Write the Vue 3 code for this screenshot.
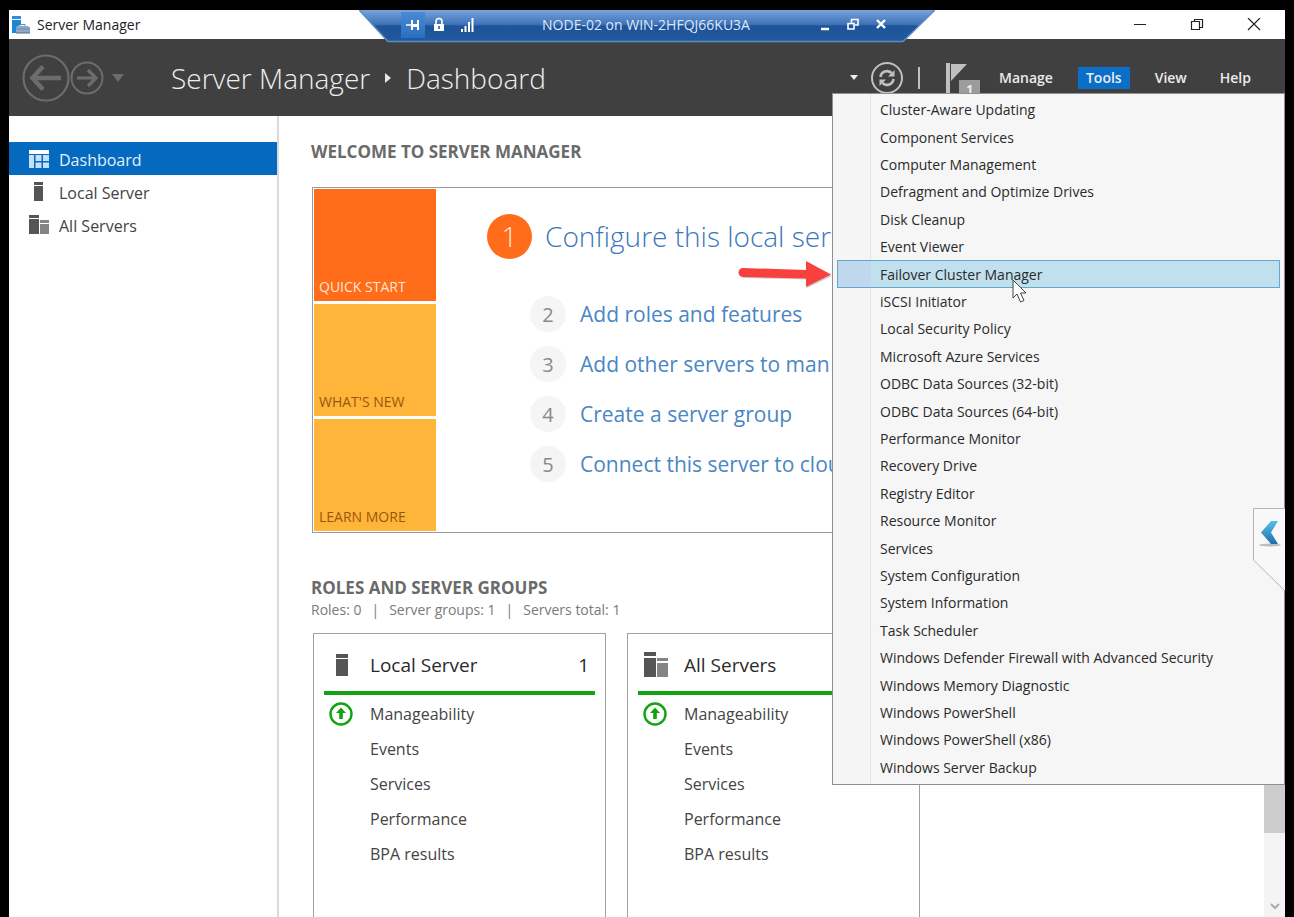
<template>
  <div class="screen">
    <div class="window">
      <!-- title bar -->
      <header class="titlebar">
        <svg class="app-icon" width="19" height="18" viewBox="0 0 19 18">
          <rect x="1" y="0" width="9" height="3" fill="#2f8fd8" />
          <path d="M1 4h9v4L6 11v6H1z" fill="#1f86d6" />
          <path d="M5 11l3-1h8l3 1v6H5z" fill="#8fa9c4" />
          <path d="M5 13h14M9 10V8.500h5V10" fill="none" stroke="#6d8db0" />
          <path d="M5 17h14" stroke="#4f6f92" />
        </svg>
        <span class="app-name">Server Manager</span>
        <div class="window-buttons">
          <button class="window-button" aria-label="Minimize">
            <svg width="14" height="14" viewBox="0 0 14 14"><path d="M1 6.500h12" stroke="#222" /></svg>
          </button>
          <button class="window-button" aria-label="Restore">
            <svg width="14" height="14" viewBox="0 0 14 14" fill="none" stroke="#222">
              <path d="M1.500 3.500h8v8h-8zM4.500 3V1.500h8v8H10" stroke-width="1.200" />
            </svg>
          </button>
          <button class="window-button" aria-label="Close">
            <svg width="14" height="14" viewBox="0 0 14 14"><path d="M1 0l12 12M13 0L1 12" stroke="#222" stroke-width="1.200" /></svg>
          </button>
        </div>
      </header>

      <!-- remote connection bar -->
      <div class="rdp-bar">
        <svg class="rdp-shape" width="576" height="33" viewBox="0 0 576 33">
          <defs>
            <linearGradient id="rdpFill" x1="0" y1="0" x2="0" y2="1">
              <stop offset="0" stop-color="#79a3db" />
              <stop offset="0.450" stop-color="#3d72b8" />
              <stop offset="0.500" stop-color="#1f5299" />
              <stop offset="1" stop-color="#215a9f" />
            </linearGradient>
          </defs>
          <path d="M0 0h576l-32 32H29z" fill="url(#rdpFill)" />
          <path d="M0 0l29 31.500h515L576 0" fill="none" stroke="#5d8cc0" stroke-width="1.500" />
        </svg>
        <div class="rdp-content">
          <button class="rdp-button rdp-pin" aria-label="Pin">
            <svg width="16" height="14" viewBox="0 0 16 14" fill="none" stroke="#fff">
              <path d="M1 7h6" stroke-width="1.500" />
              <path d="M7 2v10M13 2v10" stroke-width="2" />
              <path d="M7 7.500h6" stroke-width="3" />
            </svg>
          </button>
          <button class="rdp-button" aria-label="Security">
            <svg width="14" height="16" viewBox="0 0 14 16">
              <path d="M4 7V4.500a3 3 0 0 1 6 0V7" fill="none" stroke="#fff" stroke-width="1.600" />
              <rect x="2" y="7" width="10" height="7" fill="#fff" />
              <path d="M7 9v3" stroke="#24599f" stroke-width="1.600" />
            </svg>
          </button>
          <button class="rdp-button" aria-label="Connection quality">
            <svg width="16" height="16" viewBox="0 0 16 16" fill="none" stroke="#fff" stroke-width="2">
              <path d="M3 15v-3M6.500 15V9M10 15V5M13.500 15V1" />
            </svg>
          </button>
          <span class="rdp-title">NODE-02 on WIN-2HFQJ66KU3A</span>
          <button class="rdp-button" aria-label="Minimize connection">
            <svg width="12" height="14" viewBox="0 0 12 14"><path d="M2 11h8" stroke="#fff" stroke-width="2.500" /></svg>
          </button>
          <button class="rdp-button" aria-label="Restore connection">
            <svg width="14" height="14" viewBox="0 0 14 14" fill="none" stroke="#fff" stroke-width="1.600">
              <path d="M2 5.500h6V11H2zM5.500 4.500V1.500H12V7H9" />
            </svg>
          </button>
          <button class="rdp-button" aria-label="Disconnect">
            <svg width="12" height="14" viewBox="0 0 12 14"><path d="M2 2l8 8M10 2l-8 8" stroke="#fff" stroke-width="2.400" /></svg>
          </button>
        </div>
      </div>

      <!-- navigation band -->
      <nav class="navband">
        <button class="nav-button" aria-label="Back">
          <svg width="48" height="48" viewBox="0 0 48 48" fill="none" stroke="#6c6c6c">
            <circle cx="24" cy="24" r="22.500" stroke-width="2.200" />
            <path d="M39 24H12M21 12.500L10.500 24 21 35.500" stroke-width="4.500" />
          </svg>
        </button>
        <button class="nav-button" aria-label="Forward">
          <svg width="34" height="34" viewBox="0 0 34 34" fill="none" stroke="#6c6c6c">
            <circle cx="17" cy="17" r="15.500" stroke-width="2" />
            <path d="M7 17h18M18 9l8 8-8 8" stroke-width="3.200" />
          </svg>
        </button>
        <button class="nav-button nav-history" aria-label="History">
          <svg width="12" height="8" viewBox="0 0 12 8"><path d="M0 0h12L6 8z" fill="#6c6c6c" /></svg>
        </button>
        <h1 class="breadcrumb">
          <span>Server Manager</span>
          <svg width="6" height="10" viewBox="0 0 6 10"><path d="M0 0l6 5-6 5z" fill="#e8e8e8" /></svg>
          <span>Dashboard</span>
        </h1>
        <div class="nav-actions">
          <button class="nav-button" aria-label="Notifications list">
            <svg width="8" height="5" viewBox="0 0 8 5"><path d="M0 0h8L4 5z" fill="#eee" /></svg>
          </button>
          <button class="nav-button refresh" aria-label="Refresh">
            <svg width="34" height="34" viewBox="0 0 34 34" fill="none" stroke="#c0c0c0">
              <circle cx="17" cy="17" r="15" stroke-width="2" />
              <path d="M10.500 16a6.500 6.500 0 0 1 11-4M23.500 18a6.500 6.500 0 0 1-11 4" stroke-width="2.600" />
              <path d="M24.500 9v6.500H18zM9.500 25v-6.500H16z" fill="#c0c0c0" stroke="none" />
            </svg>
          </button>
          <span class="nav-separator"></span>
          <button class="nav-button flag" aria-label="Notifications">
            <svg width="24" height="32" viewBox="0 0 24 32">
              <path d="M0 1h4v30H0z" fill="#c0c0c0" />
              <path d="M5 2h16L5 19z" fill="#c0c0c0" />
            </svg>
            <span class="flag-count">1</span>
          </button>
          <button
            v-for="menu in menus"
            :key="menu"
            :class="['menu-button', { active: openMenu === menu }]"
            @click="openMenu = menu"
          >
            {{ menu }}
          </button>
        </div>
      </nav>

      <div class="body">
        <!-- sidebar -->
        <aside class="sidebar">
          <a
            v-for="item in sidebarItems"
            :key="item.label"
            href="#"
            :class="['side-item', { active: activeItem === item.label }]"
            @click.prevent="activeItem = item.label"
          >
            <svg class="side-icon" width="22" height="20" viewBox="0 0 22 20">
              <g v-if="item.icon === 'dashboard'">
                <path d="M1 1h20v4H1z" fill="#fff" />
                <path d="M1 6h5v13H1zM7.500 6h6v6h-6zM15 6h6v6h-6zM7.500 13.500h6V19h-6zM15 13.500h6V19h-6z" fill="#c5e1f7" />
              </g>
              <g v-else-if="item.icon === 'server'" fill="#555">
                <path d="M6 0h9v3H6zM6 4h9v15H6z" />
              </g>
              <g v-else>
                <path d="M1 0h10v3H1zM1 4h10v15H1z" fill="#555" />
                <path d="M12 5h9v3h-9zM12 9h9v10h-9z" fill="#858585" />
              </g>
            </svg>
            <span>{{ item.label }}</span>
          </a>
        </aside>

        <!-- dashboard -->
        <main class="content">
          <h2 class="section-title">WELCOME TO SERVER MANAGER</h2>
          <section class="welcome">
            <div class="welcome-tabs">
              <button v-for="tab in welcomeTabs" :key="tab" :class="['welcome-tab', { active: welcomeTab === tab }]" @click="welcomeTab = tab">
                {{ tab }}
              </button>
            </div>
            <ol class="steps">
              <li v-for="(step, index) in steps" :key="step" :class="['step', { primary: index === 0 }]">
                <span class="step-number">{{ index + 1 }}</span>
                <a href="#" class="step-link">{{ step }}</a>
              </li>
            </ol>
          </section>

          <h2 class="section-title">ROLES AND SERVER GROUPS</h2>
          <p class="summary">
            <span>Roles: 0</span><span>|</span><span>Server groups: 1</span><span>|</span><span>Servers total: 1</span>
          </p>
          <div class="tiles">
            <article v-for="tile in tiles" :key="tile.name" class="tile">
              <div class="tile-head">
                <svg width="26" height="26" viewBox="0 0 26 26">
                  <path v-if="tile.icon === 'server'" d="M7 2h12v4H7zM7 7h12v17H7z" fill="#555" />
                  <g v-else>
                    <path d="M1 0h12v4H1zM1 6h12v19H1z" fill="#555" />
                    <path d="M14 6h11v3H14zM14 11h11v14H14z" fill="#858585" />
                  </g>
                </svg>
                <span class="tile-name">{{ tile.name }}</span>
                <span v-if="tile.count" class="tile-count">{{ tile.count }}</span>
              </div>
              <a v-for="row in tileRows" :key="row" href="#" class="tile-row">
                <svg v-if="row === 'Manageability'" width="24" height="24" viewBox="0 0 24 24">
                  <circle cx="12" cy="12" r="10.500" fill="none" stroke="#12a312" stroke-width="2.400" />
                  <path d="M12 5.500l5 5.500h-3.200v6h-3.600v-6H7z" fill="#12a312" />
                </svg>
                <span class="tile-label">{{ row }}</span>
              </a>
            </article>
          </div>
        </main>

        <div class="scrollbar">
          <div class="scroll-thumb"></div>
          <svg width="10" height="7" viewBox="0 0 10 7"><path d="M1 1l4 4 4-4" fill="none" stroke="#aaa" stroke-width="2" /></svg>
        </div>
      </div>

      <!-- tools menu -->
      <div class="tools-menu" role="menu">
        <button
          v-for="tool in tools"
          :key="tool"
          role="menuitem"
          :class="['tool', { highlighted: tool === highlighted }]"
          @mouseenter="highlighted = tool"
        >
          {{ tool }}
        </button>
      </div>

      <!-- slide-out handle -->
      <button class="side-handle" aria-label="Expand panel">
        <svg width="32" height="84" viewBox="0 0 32 84">
          <defs>
            <linearGradient id="chevronFill" x1="0" y1="0" x2="0" y2="1">
              <stop offset="0" stop-color="#55c0ea" />
              <stop offset="1" stop-color="#246ea8" />
            </linearGradient>
          </defs>
          <path d="M32 0.500H0.500V52L32 83" fill="#f8f8f8" stroke="#b5b5b5" />
          <ellipse cx="17" cy="37" rx="11" ry="1.500" fill="#bdbdbd" />
          <path d="M18 13h7l-7 11.500 7 11.500h-7L8 24.500z" fill="url(#chevronFill)" />
        </svg>
      </button>

      <!-- pointer and callout arrow -->
      <svg class="callout" width="96" height="30" viewBox="0 0 96 30">
        <path d="M7 10.500l63 2V4l25 12-25 12v-8.500L7 18a4 4 0 0 1 0-7.500z" fill="#888" opacity="0.400" />
        <path d="M6 8l63 2V1l25 13.500L69 27v-8.500L6 17a4.500 4.500 0 0 1 0-9z" fill="#f8403f" />
      </svg>
      <svg class="pointer" width="16" height="24" viewBox="0 0 16 24">
        <path d="M1 1v18l4-4 3.500 8 3.500-1.500-3.500-7.500H14z" fill="#fff" stroke="#444" />
      </svg>
    </div>
  </div>
</template>

<script setup>
import { ref } from 'vue'

const menus = ['Manage', 'Tools', 'View', 'Help']
const openMenu = ref('Tools')

const sidebarItems = [
  { label: 'Dashboard', icon: 'dashboard' },
  { label: 'Local Server', icon: 'server' },
  { label: 'All Servers', icon: 'servers' }
]
const activeItem = ref('Dashboard')

const welcomeTabs = ['QUICK START', "WHAT'S NEW", 'LEARN MORE']
const welcomeTab = ref('QUICK START')

const steps = [
  'Configure this local ser',
  'Add roles and features',
  'Add other servers to man',
  'Create a server group',
  'Connect this server to clou'
]

const tiles = [
  { name: 'Local Server', icon: 'server', count: 1 },
  { name: 'All Servers', icon: 'servers' }
]
const tileRows = ['Manageability', 'Events', 'Services', 'Performance', 'BPA results']

const tools = [
  'Cluster-Aware Updating',
  'Component Services',
  'Computer Management',
  'Defragment and Optimize Drives',
  'Disk Cleanup',
  'Event Viewer',
  'Failover Cluster Manager',
  'iSCSI Initiator',
  'Local Security Policy',
  'Microsoft Azure Services',
  'ODBC Data Sources (32-bit)',
  'ODBC Data Sources (64-bit)',
  'Performance Monitor',
  'Recovery Drive',
  'Registry Editor',
  'Resource Monitor',
  'Services',
  'System Configuration',
  'System Information',
  'Task Scheduler',
  'Windows Defender Firewall with Advanced Security',
  'Windows Memory Diagnostic',
  'Windows PowerShell',
  'Windows PowerShell (x86)',
  'Windows Server Backup'
]
const highlighted = ref('Failover Cluster Manager')
</script>

<style>
body {
  background: #000;
}
</style>

<style scoped>
.screen {
  box-sizing: border-box;
  height: 100vh;
  padding: 10px 9px 0;
  background: #000;
  font-family: "Open Sans", "Noto Sans", sans-serif;
  overflow: hidden;
}

.screen * {
  box-sizing: border-box;
}

button {
  padding: 0;
  border: none;
  background: none;
  font-family: inherit;
  cursor: pointer;
}

a {
  text-decoration: none;
}

svg {
  display: block;
  flex-shrink: 0;
}

.window {
  position: relative;
  display: flex;
  flex-direction: column;
  height: 100%;
  background: #fff;
}

.titlebar {
  display: flex;
  align-items: center;
  height: 29px;
  flex-shrink: 0;
  padding: 0 3px 0 2px;
}

.app-name {
  margin-left: 7px;
  font-size: 14px;
  color: #222;
}

.window-buttons {
  display: flex;
  margin-left: auto;
}

.window-button {
  display: flex;
  align-items: center;
  justify-content: center;
  width: 57px;
  height: 26px;
}

.rdp-bar {
  position: absolute;
  top: 0;
  left: 350px;
  width: 576px;
  height: 33px;
}

.rdp-shape {
  position: absolute;
  top: 0;
  left: 0;
}

.rdp-content {
  position: relative;
  display: flex;
  align-items: center;
  height: 29px;
  padding: 0 40px 0 42px;
}

.rdp-button {
  display: flex;
  align-items: center;
  justify-content: center;
  width: 28px;
  height: 26px;
}

.rdp-pin {
  width: 24px;
  background: linear-gradient(#4a8ad2, #2a70c0);
}

.rdp-title {
  flex: 1;
  text-align: center;
  font-size: 14px;
  color: #dce8f7;
  white-space: nowrap;
}

.navband {
  display: flex;
  align-items: center;
  height: 77px;
  flex-shrink: 0;
  padding: 0 26px 0 13px;
  background: #404040;
}

.nav-button {
  display: flex;
  align-items: center;
}

.nav-history {
  margin-left: 8px;
}

.breadcrumb {
  display: flex;
  align-items: center;
  gap: 15px;
  margin: 0 0 0 47px;
  font-size: 28px;
  font-weight: 300;
  color: #eee;
  white-space: nowrap;
}

.nav-actions {
  display: flex;
  align-items: center;
  margin-left: auto;
}

.refresh {
  margin: 0 14px 0 12px;
}

.nav-separator {
  width: 2px;
  height: 22px;
  background: #c0c0c0;
}

.flag {
  position: relative;
  margin: 0 4px 0 26px;
}

.flag-count {
  position: absolute;
  top: 18px;
  left: 13px;
  width: 21px;
  height: 20px;
  background: #9c9c9c;
  color: #eee;
  font-size: 12px;
  line-height: 20px;
  font-weight: 700;
  text-align: center;
}

.menu-button {
  height: 22px;
  margin-left: 17px;
  padding: 0 8px;
  font-size: 14px;
  line-height: 22px;
  font-weight: 600;
  color: #ececec;
}

.menu-button.active {
  background: #0a6fc9;
}

.body {
  display: flex;
  flex: 1;
  min-height: 0;
  overflow: hidden;
}

.sidebar {
  display: flex;
  flex-direction: column;
  width: 270px;
  flex-shrink: 0;
  padding-top: 26px;
  border-right: 2px solid #d9d9d9;
}

.side-item {
  display: flex;
  align-items: center;
  height: 33px;
  padding-left: 19px;
  font-size: 16px;
  color: #444;
}

.side-item span {
  margin-left: 9px;
  padding-top: 2px;
}

.side-item.active {
  background: #0569bf;
  color: #e3f0fb;
}

.content {
  flex: 1;
  min-width: 0;
  padding: 24px 14px 0 32px;
  overflow: hidden;
}

.section-title {
  margin: 0;
  font-size: 17px;
  line-height: 24px;
  font-weight: 700;
  color: #6a6a6a;
}

.welcome {
  display: flex;
  height: 346px;
  margin: 23px 0 43px 1px;
  border: 1px solid #9a9a9a;
  overflow: hidden;
}

.welcome-tabs {
  display: flex;
  flex-direction: column;
  gap: 3px;
  width: 123px;
  flex-shrink: 0;
  padding: 1px 0 1px 1px;
}

.welcome-tab {
  display: flex;
  align-items: flex-end;
  flex: 1;
  padding: 0 5px 5px;
  background: #ffb53a;
  color: #99570c;
  font-size: 14px;
}

.welcome-tab.active {
  background: #ff6c1a;
  color: #ffe6d4;
}

.steps {
  flex: 1;
  margin: 0;
  padding: 21px 0 0 94px;
  list-style: none;
}

.step {
  display: flex;
  align-items: center;
  height: 50px;
  white-space: nowrap;
}

.step.primary {
  height: 54px;
  margin: 0 0 26px -43px;
}

.step-number {
  display: flex;
  align-items: center;
  justify-content: center;
  width: 36px;
  height: 36px;
  border-radius: 50%;
  background: #f5f5f5;
  color: #8a8a8a;
  font-size: 20px;
}

.step-link {
  margin-left: 14px;
  font-size: 21px;
  font-weight: 400;
  color: #4a86c4;
}

.primary .step-number {
  width: 45px;
  height: 45px;
  background: #ff6c1a;
  color: #ffe6d4;
  font-size: 28px;
  font-weight: 300;
}

.primary .step-link {
  margin-left: 13px;
  font-size: 28px;
  font-weight: 300;
  color: #3a78ba;
}

.summary {
  display: flex;
  gap: 10px;
  margin: 0;
  font-size: 14px;
  line-height: 20px;
  color: #7a7a7a;
}

.tiles {
  display: flex;
  gap: 21px;
  margin: 13px 0 0 2px;
}

.tile {
  width: 293px;
  height: 360px;
  flex-shrink: 0;
  padding: 0 10px;
  border: 1px solid #a0a0a0;
}

.tile-head {
  display: flex;
  align-items: center;
  height: 61px;
  margin-bottom: 1px;
  padding: 4px 6px 0 5px;
  border-bottom: 4px solid #12a312;
  font-size: 19px;
  color: #2a2a2a;
}

.tile-name {
  margin-left: 15px;
}

.tile-count {
  margin-left: auto;
}

.tile-row {
  display: flex;
  align-items: center;
  height: 35px;
  padding-left: 5px;
  font-size: 16px;
  color: #444;
}

.tile-label {
  margin-left: 41px;
}

.tile-row svg + .tile-label {
  margin-left: 17px;
}

.scrollbar {
  display: flex;
  flex-direction: column;
  align-items: center;
  justify-content: space-between;
  width: 21px;
  flex-shrink: 0;
  padding-bottom: 7px;
  background: #f4f4f4;
}

.scroll-thumb {
  width: 100%;
  height: 717px;
  background: #cdcdcd;
}

.tools-menu {
  position: absolute;
  top: 83px;
  right: 0;
  display: grid;
  grid-auto-rows: 1fr;
  width: 453px;
  height: 692px;
  padding: 2px 4px 3px;
  background: linear-gradient(90deg, #f5f5f5 37px, #e4e4e4 37px, #e4e4e4 38px, #f6f6f6 38px);
  border: 1px solid #909090;
}

.tool {
  padding: 0 0 0 42px;
  border: 1px solid transparent;
  font-size: 14px;
  text-align: left;
  color: #2a2a2a;
  white-space: nowrap;
}

.tool.highlighted {
  background: linear-gradient(90deg, #c0d8ee 33px, #c0e0ee 33px);
  border-color: #62a9cf;
}

.side-handle {
  position: absolute;
  top: 498px;
  right: 0;
}

.callout {
  position: absolute;
  top: 250px;
  left: 728px;
}

.pointer {
  position: absolute;
  top: 269px;
  left: 1003px;
}
</style>
